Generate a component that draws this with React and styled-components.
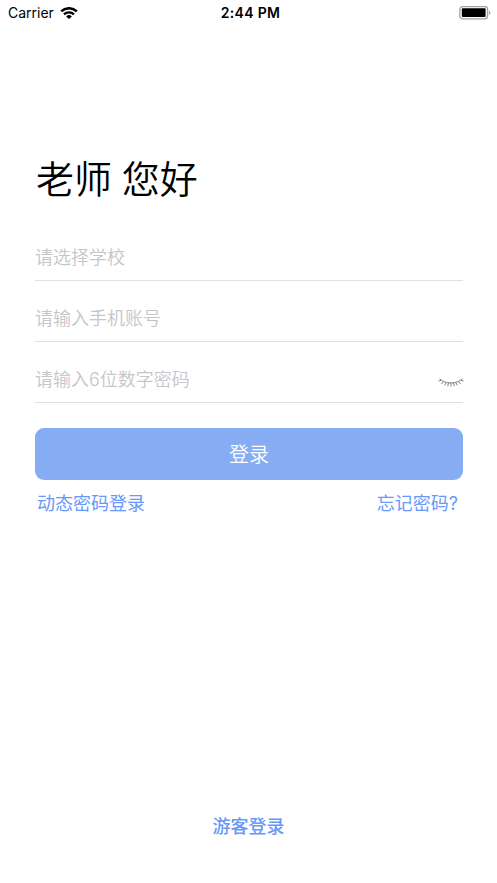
import React from 'react';
import styled, { createGlobalStyle } from 'styled-components';

const GlobalStyle = createGlobalStyle`
    * {
        box-sizing: border-box;
    }

    body {
        margin: 0;
        background: #fff;
        font-family: Inter, 'Noto Sans CJK SC', sans-serif;
    }
`;

const Screen = styled.div`
    display: flex;
    flex-direction: column;
    width: 100%;
    height: 883px;
    overflow: hidden;
    background: #fff;
`;

const StatusBar = styled.header`
    display: grid;
    grid-template-columns: 1fr auto 1fr;
    align-items: center;
    height: 26px;
    padding: 0 6px 0 8px;
    color: #000;
    font-size: 14px;
    line-height: 26px;
`;

const Carrier = styled.div`
    display: flex;
    align-items: center;
    gap: 6px;
`;

const Clock = styled.div`
    padding-left: 2px;
    font-weight: 600;
    letter-spacing: 0.3px;
`;

const BatterySlot = styled.div`
    display: flex;
    justify-content: flex-end;
`;

const Content = styled.main`
    display: flex;
    flex: 1;
    flex-direction: column;
    padding: 123px 34px 0 35px;
`;

const Title = styled.h1`
    margin: 0 0 0 1px;
    height: 60px;
    font-size: 38px;
    font-weight: 350;
    line-height: 60px;
    word-spacing: -1px;
`;

const Form = styled.div`
    display: flex;
    flex-direction: column;
    margin-top: 11px;
`;

const Field = styled.div`
    display: flex;
    align-items: center;
    justify-content: space-between;
    height: 61px;
    padding-top: 15px;
    border-bottom: 1px solid #dfdfe1;

    svg {
        margin: 6px -1px 0 0;
    }
`;

const Placeholder = styled.span`
    color: #c5c5ca;
    font-size: 18px;
    font-weight: 350;
    line-height: 45px;
`;

const LoginButton = styled.button`
    height: 52.5px;
    margin-top: 24.5px;
    padding: 2px 0 0;
    border: none;
    border-radius: 9px;
    background: #86adf3;
    color: #fff;
    font-family: inherit;
    font-size: 20px;
    font-weight: 350;
    line-height: 50px;
`;

const Links = styled.div`
    display: flex;
    justify-content: space-between;
    padding: 10px 5px 0 2px;
`;

const TextLink = styled.a`
    color: #6699fa;
    font-size: 18px;
    font-weight: ${ props => props.$medium ? 500 : 400 };
    line-height: 28px;
`;

const Guest = styled.footer`
    display: flex;
    justify-content: center;
    height: 70px;
`;

const WifiIcon = () => (
    <svg width="18" height="13" viewBox="0 0 18 13" fill="none" stroke="#000">
        <path d="M1.2 4.4a11.2 11.2 0 0 1 15.6 0" strokeWidth="2.5" />
        <path d="M4 7.4a7.2 7.2 0 0 1 10 0" strokeWidth="2.2" />
        <path d="M9 12.1 6.1 9.500a4.1 4.1 0 0 1 5.8 0z" fill="#000" stroke="none" />
    </svg>
);

const BatteryIcon = () => (
    <svg width="32" height="14" viewBox="0 0 32 14">
        <rect x="0.8" y="0.6" width="27.8" height="12.2" rx="3" fill="none" stroke="#a3a3a3" strokeWidth="1.3" />
        <rect x="2.8" y="2.2" width="23.8" height="8.9" rx="1" fill="#000" />
        <path d="M30 4.7c1.9.6 1.9 3.4 0 4z" fill="#a3a3a3" />
    </svg>
);

const ClosedEyeIcon = () => (
    <svg width="26" height="10" viewBox="0 0 26 10" fill="none" stroke="#808080" strokeWidth="1">
        <path d="M1.600.600C6.500 6.400 19.500 6.400 24.400.600" />
        <path d="M3.200 2.400.500 3M5.400 3.800 3.300 6.100M8.200 4.600 6.700 7.400M10.500 4.900 9.700 8.200M13 5v3.500M15.500 4.900l.8 3.300M17.800 4.600l1.500 2.800M20.600 3.800l2.100 2.300M22.800 2.400l2.700.600" />
    </svg>
);

const fields = [
    { id: 'school', label: '请选择学校' },
    { id: 'phone', label: '请输入手机账号' },
    { id: 'password', label: '请输入6位数字密码', secure: true },
];

const App = () => {
    return (
        <Screen>
            <GlobalStyle />
            <StatusBar>
                <Carrier>Carrier <WifiIcon /></Carrier>
                <Clock>2:44 PM</Clock>
                <BatterySlot><BatteryIcon /></BatterySlot>
            </StatusBar>
            <Content>
                <Title>老师 您好</Title>
                <Form>
                    {
                        fields.map((f) => (
                            <Field key={ f.id }>
                                <Placeholder>{ f.label }</Placeholder>
                                { f.secure && <ClosedEyeIcon /> }
                            </Field>
                        ))
                    }
                    <LoginButton>登录</LoginButton>
                </Form>
                <Links>
                    <TextLink>动态密码登录</TextLink>
                    <TextLink>忘记密码?</TextLink>
                </Links>
            </Content>
            <Guest>
                <TextLink $medium>游客登录</TextLink>
            </Guest>
        </Screen>
    );
};

export default App;
